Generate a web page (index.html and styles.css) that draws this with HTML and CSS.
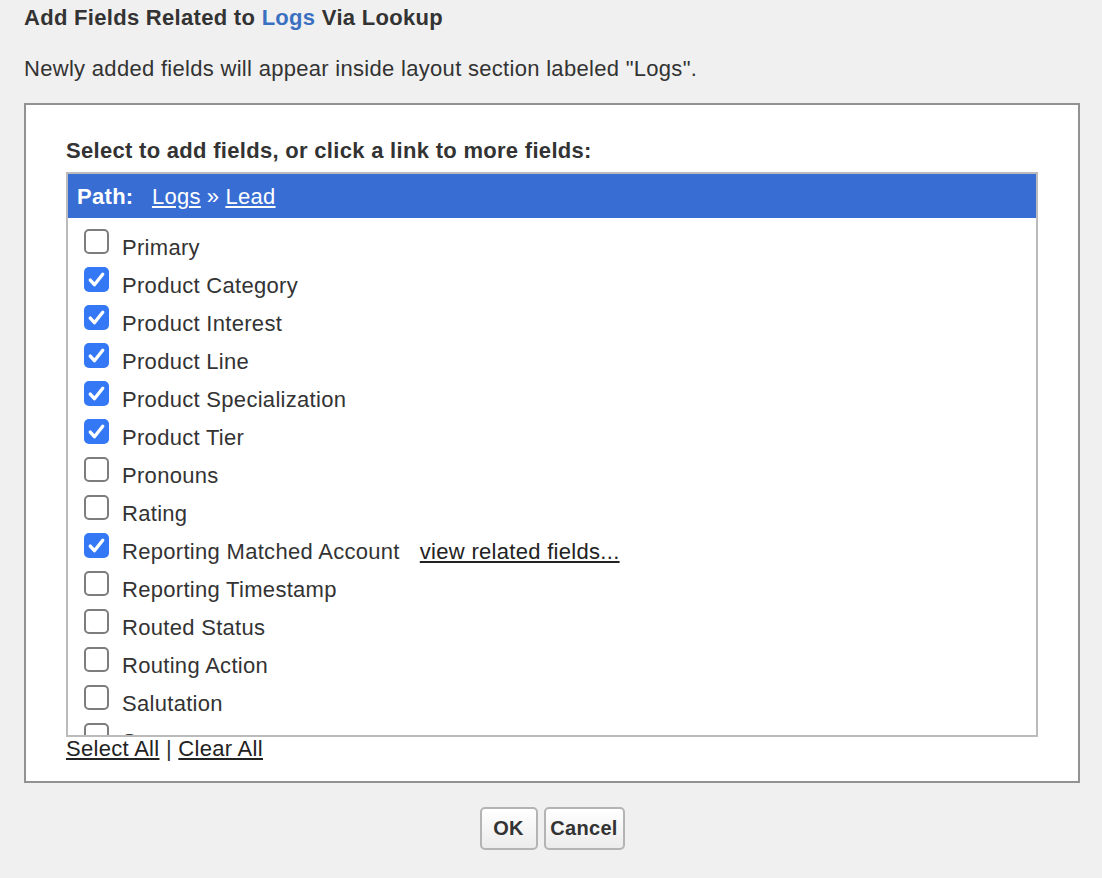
FILE: index.html
```html
<!DOCTYPE html>
<html lang="en">
  <head>
    <title>Add Fields Related to Logs Via Lookup</title>
    <meta charset="UTF-8">
    <link rel="stylesheet" href="styles.css">
  </head>
  <body>
    <h1 class="title">Add Fields Related to <span class="obj">Logs</span> Via Lookup</h1>
    <p class="note">Newly added fields will appear inside layout section labeled "Logs".</p>

    <div class="panel">
        <div class="label">Select to add fields, or click a link to more fields:</div>
        <div class="picker">
            <div class="path">
                <b>Path:</b>
                <a href="#">Logs</a><span class="sep">&raquo;</span><a href="#">Lead</a>
            </div>
            <div class="fields">
                <div class="row"><span class="box"></span>Primary</div>
                <div class="row"><span class="box on"><svg viewBox="0 0 24 24"><path d="M6 12.5l4 4.5 8-10"/></svg></span>Product Category</div>
                <div class="row"><span class="box on"><svg viewBox="0 0 24 24"><path d="M6 12.5l4 4.5 8-10"/></svg></span>Product Interest</div>
                <div class="row"><span class="box on"><svg viewBox="0 0 24 24"><path d="M6 12.5l4 4.5 8-10"/></svg></span>Product Line</div>
                <div class="row"><span class="box on"><svg viewBox="0 0 24 24"><path d="M6 12.5l4 4.5 8-10"/></svg></span>Product Specialization</div>
                <div class="row"><span class="box on"><svg viewBox="0 0 24 24"><path d="M6 12.5l4 4.5 8-10"/></svg></span>Product Tier</div>
                <div class="row"><span class="box"></span>Pronouns</div>
                <div class="row"><span class="box"></span>Rating</div>
                <div class="row"><span class="box on"><svg viewBox="0 0 24 24"><path d="M6 12.5l4 4.5 8-10"/></svg></span>Reporting Matched Account<a class="more" href="#">view related fields...</a></div>
                <div class="row"><span class="box"></span>Reporting Timestamp</div>
                <div class="row"><span class="box"></span>Routed Status</div>
                <div class="row"><span class="box"></span>Routing Action</div>
                <div class="row"><span class="box"></span>Salutation</div>
                <div class="row"><span class="box"></span>Source</div>
                <div class="row"><span class="box"></span>Status</div>
            </div>
        </div>
        <div class="bulk"><a href="#">Select All</a> | <a href="#">Clear All</a></div>
    </div>

    <div class="buttons">
        <button class="btn ok">OK</button>
        <button class="btn cancel">Cancel</button>
    </div>
  </body>
</html>
```

FILE: styles.css
```css
*{
    margin: 0;
    padding: 0;
    box-sizing: border-box;
}
html,body{width: 100%;height: 100%;}
body{
    background: #f0f0f0;
    color: #333;
    font-family: "Liberation Sans", Arial, sans-serif;
    font-size: 22px;
    letter-spacing: 0.3px;
    padding: 0 22px 0 24px;
}
a{color: #222;}

.title{
    font-size: 22px;
    line-height: 28px;
    padding-top: 4px;
}
.title .obj{color: #3a6fc2;}
.note{
    line-height: 28px;
    margin-top: 23px;
}

.panel{
    margin-top: 20px;
    background: #fff;
    border: 2px solid #929292;
    padding: 32px 40px 20px 40px;
}
.label{
    font-weight: bold;
    line-height: 28px;
    margin-bottom: 7px;
}
.picker{
    border: 2px solid #bbb;
}
.path{
    background: #386ed4;
    color: #fff;
    height: 44px;
    line-height: 46px;
    padding-left: 9px;
}
.path b{margin-right: 12px;}
.path a{color: #fff;}
.path .sep{margin: 0 6px;}

.fields{
    height: 517px;
    overflow: hidden;
    padding: 11px 0 0 16px;
}
.row{
    display: flex;
    align-items: flex-start;
    height: 38px;
    line-height: 38px;
}
.box{
    flex: none;
    width: 25px;
    height: 25px;
    margin: 0 13px 0 0;
    border: 2px solid #7d7d7d;
    border-radius: 5px;
    background: #fff;
}
.box.on{
    border: none;
    background: #3478f6;
}
.box svg{
    display: block;
    width: 25px;
    height: 25px;
    fill: none;
    stroke: #fff;
    stroke-width: 3.2;
    stroke-linecap: round;
    stroke-linejoin: round;
}
.more{margin-left: 20px;}

.bulk{
    line-height: 26px;
    margin-top: -1px;
    margin-bottom: -1px;
}

.buttons{
    display: flex;
    justify-content: center;
    gap: 6px;
    margin-top: 24px;
}
.btn{
    height: 43px;
    font-family: "Liberation Sans", Arial, sans-serif;
    font-size: 20px;
    font-weight: bold;
    letter-spacing: 0.3px;
    color: #333;
    border: 2px solid #b4b4b4;
    border-radius: 5px;
    background: linear-gradient(#fff, #ececec);
}
.ok{width: 58px;}
.cancel{width: 81px;}
```
